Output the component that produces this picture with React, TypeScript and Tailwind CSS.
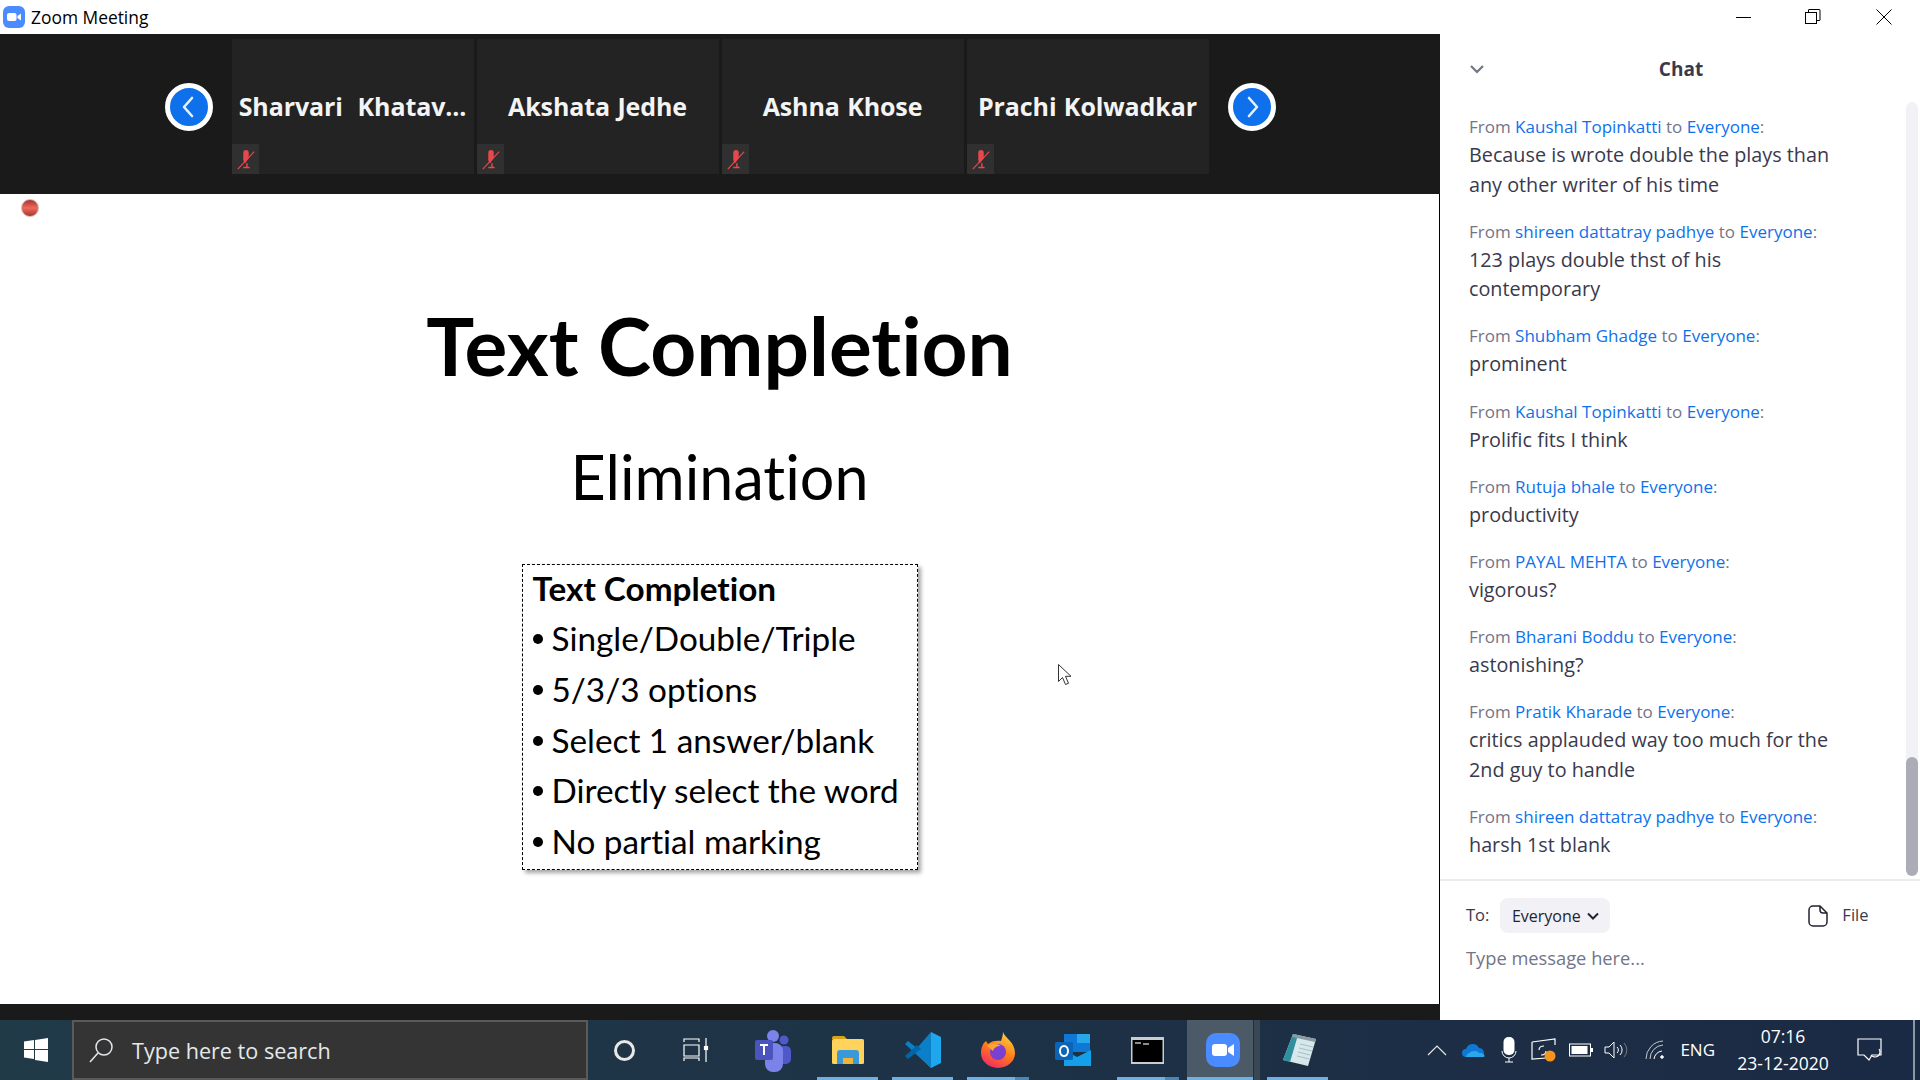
import type { ReactNode } from "react";

const participants = ["Sharvari  Khatav...", "Akshata Jedhe", "Ashna Khose", "Prachi Kolwadkar"];

const messages = [
  { from: "Kaushal Topinkatti", text: ["Because is wrote double the plays than", "any other writer of his time"] },
  { from: "shireen dattatray padhye", text: ["123 plays double thst of his", "contemporary"] },
  { from: "Shubham Ghadge", text: ["prominent"] },
  { from: "Kaushal Topinkatti", text: ["Prolific fits I think"] },
  { from: "Rutuja bhale", text: ["productivity"] },
  { from: "PAYAL MEHTA", text: ["vigorous?"] },
  { from: "Bharani Boddu", text: ["astonishing?"] },
  { from: "Pratik Kharade", text: ["critics applauded way too much for the", "2nd guy to handle"] },
  { from: "shireen dattatray padhye", text: ["harsh 1st blank"] },
];

const bullets = ["Single/Double/Triple", "5/3/3 options", "Select 1 answer/blank", "Directly select the word", "No partial marking"];

function MutedMic() {
  return (
    <div className="absolute bottom-0 left-0 flex h-[30px] w-[27px] items-center justify-center bg-[#303030]">
      <svg width="20" height="20" viewBox="0 0 22 24" fill="none" preserveAspectRatio="none" className="mt-[1px] ml-[2px]">
        <path d="M8 3a3 3 0 0 1 6 0v7l-4 6c-1-1-2-3-2-5z" fill="#e5484d" />
        <path d="M12 16v4M8 21h7" stroke="#e5484d" strokeWidth="1.6" />
        <path d="M2 23 20 2" stroke="#e5484d" strokeWidth="1.2" />
      </svg>
    </div>
  );
}

function NavButton({ right }: { right?: boolean }) {
  return (
    <div className="flex h-12 w-12 items-center justify-center rounded-full border-[5px] border-white bg-[#0e71eb]">
      <svg width="28" height="28" viewBox="0 0 28 28" fill="none" stroke="#e8f1fd" strokeWidth="2.6" strokeLinecap="round" strokeLinejoin="round">
        <path d={right ? "M11 5l8 9-8 9" : "M17 5l-8 9 8 9"} />
      </svg>
    </div>
  );
}

function TitleBar() {
  return (
    <div className="flex h-[34px] shrink-0 items-center bg-white pl-[3px] font-['Open_Sans',sans-serif]">
      <svg width="22" height="22" viewBox="0 0 22 22" className="mr-[6px]">
        <rect width="22" height="22" rx="6" fill="#4a8cff" />
        <rect x="4" y="7" width="9.5" height="8" rx="2" fill="white" />
        <path d="M14.5 10l3.5-2.5v7L14.5 12z" fill="white" />
      </svg>
      <span className="text-[17.4px] text-black">Zoom Meeting</span>
      <div className="ml-auto flex items-center">
        <svg width="16" height="16" viewBox="0 0 16 16" fill="none" stroke="black" strokeWidth="1" className="mr-[53px]">
          <path d="M0 8.5h15" />
        </svg>
        <svg width="16" height="16" viewBox="0 0 16 16" fill="none" stroke="black" strokeWidth="1" className="mr-[55px]">
          <rect x="0.5" y="3.5" width="11" height="11" />
          <path d="M3.5 3.5V1a.5.5 0 0 1 .5-.5h10.5a.5.5 0 0 1 .5.5v10a.5.5 0 0 1-.5.5h-3" />
        </svg>
        <svg width="16" height="16" viewBox="0 0 16 16" fill="none" stroke="black" strokeWidth="1" className="mr-[28px]">
          <path d="M.5.5l15 15M15.5.5l-15 15" />
        </svg>
      </div>
    </div>
  );
}

function ParticipantStrip() {
  return (
    <div className="flex h-[160px] shrink-0 justify-center gap-[3px] bg-[#1a1a1a] pt-[5px]">
      <div className="mr-[16px] flex h-[135px] items-center">
        <NavButton />
      </div>
      {participants.map((name) => (
        <div key={name} className="relative flex h-[135px] w-[242px] items-center justify-center whitespace-pre bg-[#232323] font-['Open_Sans',sans-serif] text-[25px] font-bold tracking-[-0.1px] text-[#f4f4f4] [word-spacing:1px]">
          {name}
          <MutedMic />
        </div>
      ))}
      <div className="ml-[16px] flex h-[135px] items-center">
        <NavButton right />
      </div>
    </div>
  );
}

function Slide() {
  return (
    <div className="relative flex flex-1 flex-col items-center border-r border-black bg-white font-['Lato',sans-serif] text-black [font-variant-ligatures:none]">
      <div className="absolute top-[5px] left-[21px] h-[18px] w-[18px] rounded-full border border-[#d9b5b0] bg-gradient-to-b from-[#a8352c] via-[#ee6a5e] to-[#a8352c]" />
      <h1 className="mt-[101px] text-[80.2px] leading-[100px] font-bold">Text Completion</h1>
      <div className="mt-[44px] text-[61px] leading-[76px]">Elimination</div>
      <div className="mt-[49px] h-[306px] w-[396px] border border-dashed border-black px-[10px] shadow-[3px_3px_4px_rgba(0,0,0,0.35)]">
        <div className="mb-[3px] text-[33.3px] leading-[46px] font-bold">Text Completion</div>
        {bullets.map((b) => (
          <div key={b} className="flex h-[50.7px] items-center text-[33.3px]">
            <span className="mr-[9px] inline-block h-[10px] w-[10px] rounded-full bg-black" />
            {b}
          </div>
        ))}
      </div>
      <svg width="16" height="24" viewBox="0 0 16 24" className="absolute top-[469px] left-[1057px]">
        <path d="M1.5 1.5v17l4-4 3 7 3-1.2-3-7h5.5z" fill="white" stroke="#333" strokeWidth="1" />
      </svg>
    </div>
  );
}

function ChatPanel() {
  return (
    <div className="relative flex w-[480px] flex-col bg-white font-['Open_Sans',sans-serif]">
      <div className="relative flex h-[79px] shrink-0 items-start justify-center pt-[22px]">
        <svg width="14" height="10" viewBox="0 0 14 10" fill="none" stroke="#6e7680" strokeWidth="2.2" className="absolute top-[30px] left-[30px]">
          <path d="M1 2l6 6 6-6" />
        </svg>
        <span className="ml-[2px] text-[19px] leading-[26px] font-bold text-[#39394d]">Chat</span>
      </div>
      <div className="flex h-[766px] flex-col overflow-hidden pl-[29px]">
        {messages.map((m, i) => (
          <div key={i} className="mb-[18.7px]">
            <div className="text-[17px] leading-[27px] text-[#747487]">
              From <span className="text-[#0e71eb]">{m.from}</span> to <span className="text-[#0e71eb]">Everyone</span>:
            </div>
            {m.text.map((line) => (
              <div key={line} className="text-[19.8px] leading-[29.5px] text-[#39394d]">{line}</div>
            ))}
          </div>
        ))}
      </div>
      <div className="absolute top-[68px] right-[2px] h-[774px] w-3 rounded-md bg-[#f1f1f6]">
        <div className="absolute right-0 bottom-0 h-[119px] w-3 rounded-md bg-[#acacb9]" />
      </div>
      <div className="border-t-2 border-[#ececf0] pl-[26px]">
        <div className="mt-[17px] flex items-center text-[16.5px] text-[#39394d]">
          To:
          <div className="ml-[11px] flex h-[35px] w-[110px] items-center justify-center gap-[6px] rounded-lg bg-[#f1f1f6] text-[16px] text-[#232333]">
            Everyone
            <svg width="12" height="8" viewBox="0 0 12 8" fill="none" stroke="#232333" strokeWidth="2">
              <path d="M1 1.5l5 5 5-5" />
            </svg>
          </div>
          <svg width="20" height="22" viewBox="0 0 20 22" fill="none" stroke="#232333" strokeWidth="1.5" className="mr-[14px] ml-[198px]">
            <path d="M5 1h7l7 7v9a4 4 0 0 1-4 4H5a4 4 0 0 1-4-4V5a4 4 0 0 1 4-4zM12 1v4a3 3 0 0 0 3 3h4" />
          </svg>
          File
        </div>
        <div className="mt-[10px] text-[18.3px] leading-[30px] text-[#747487]">Type message here...</div>
      </div>
    </div>
  );
}

function Slot({ children, underline, stacked, active, w = "w-[75px]" }: { children: ReactNode; underline?: string; stacked?: boolean; active?: boolean; w?: string }) {
  return (
    <div className={`relative flex h-full shrink-0 items-center justify-center ${w}`}>
      {active && <div className="absolute inset-y-0 left-[2px] w-[66px] bg-[#4b5a66]" />}
      {active && <div className="absolute inset-y-0 left-[69px] w-[6px] bg-[#3a4854]" />}
      <div className="relative flex">{children}</div>
      {underline && <div className={`absolute bottom-0 h-[3px] bg-[#6cb0e4] ${underline}`} />}
      {stacked && <div className="absolute right-[6px] bottom-0 h-[3px] w-[14px] bg-[#4a86b4]" />}
    </div>
  );
}

function TeamsIcon() {
  return (
    <svg width="36" height="44" viewBox="0 0 36 44">
      <circle cx="29" cy="12" r="4.5" fill="#5059c9" />
      <rect x="24" y="18" width="12" height="18" rx="5" fill="#5059c9" />
      <circle cx="18" cy="8" r="6" fill="#7b83eb" />
      <rect x="10" y="15" width="18" height="29" rx="8" fill="#7b83eb" />
      <rect x="0" y="12" width="18" height="20" rx="2" fill="#4b53bc" />
      <path d="M5 17h8M9 17v10" stroke="white" strokeWidth="2" />
    </svg>
  );
}

function ExplorerIcon() {
  return (
    <svg width="32" height="28" viewBox="0 0 32 28">
      <path d="M0 2a2 2 0 0 1 2-2h10l3 3h-15z" fill="#d9a21b" />
      <rect y="3" width="32" height="25" rx="1.5" fill="#ffd35c" />
      <path d="M5 28V17a3 3 0 0 1 3-3h16a3 3 0 0 1 3 3v11h-6v-6H11v6z" fill="#3a9ad9" />
      <rect x="11" y="22" width="10" height="6" fill="#f2b53a" />
    </svg>
  );
}

function VsCodeIcon() {
  return (
    <svg width="36" height="36" viewBox="0 0 36 36">
      <path d="M26 0l10 5v26l-10 5-14-14 14-10z" fill="#1fa7ee" />
      <path d="M26 0v36L0 12l3-3 9 7z" fill="#0b7fc7" />
      <path d="M0 24l3 3 9-7 4-3-4-4z" fill="#0065a9" />
    </svg>
  );
}

function FirefoxIcon() {
  return (
    <svg width="34" height="36" viewBox="0 0 34 36">
      <defs>
        <linearGradient id="ff" x1="0.7" y1="0" x2="0.2" y2="1">
          <stop offset="0" stopColor="#ffcf3a" />
          <stop offset="0.5" stopColor="#ff7a1a" />
          <stop offset="1" stopColor="#f0246a" />
        </linearGradient>
      </defs>
      <path d="M22 0c2 6 12 10 12 21a17 15 0 0 1-34 0c0-5 2-10 5-12l2 3c3-3 9-4 13-3 1-3 2-6 2-9z" fill="url(#ff)" />
      <circle cx="17" cy="20" r="8" fill="#7b3fd1" />
      <path d="M6 14c4-3 10-3 14 0-5 0-7 2-8 5z" fill="#ffa436" />
    </svg>
  );
}

function OutlookIcon() {
  return (
    <svg width="36" height="32" viewBox="0 0 36 32">
      <rect x="9" y="0" width="26" height="18" fill="#0f78d4" />
      <rect x="22" y="0" width="13" height="9" fill="#28a8ea" />
      <path d="M9 16l13 7 14-7v16H9z" fill="#14a0e8" />
      <rect x="0" y="8" width="18" height="18" rx="1.5" fill="#0a65b8" />
      <ellipse cx="9" cy="17" rx="4" ry="5" fill="none" stroke="white" strokeWidth="2" />
    </svg>
  );
}

function CmdIcon() {
  return (
    <svg width="33" height="27" viewBox="0 0 33 27">
      <rect width="33" height="27" fill="#c9cdd0" />
      <rect x="1.5" y="3" width="30" height="22" fill="#000" />
      <path d="M4 6h6M12 7h6" stroke="#bbb" strokeWidth="1.4" />
    </svg>
  );
}

function NotepadIcon() {
  return (
    <svg width="36" height="36" viewBox="0 0 36 36">
      <path d="M13 2l23 5-8 27L3 28z" fill="#d6e8ea" />
      <path d="M3 28l10-26 5 1L10 30z" fill="#2f8f9f" />
      <path d="M13 2l23 5-1 3-23-5z" fill="#8a9aa0" />
      <path d="M20 12l13 3M19 16l13 3M18 20l12 3M17 24l12 3" stroke="#a9bcc2" strokeWidth="1" />
    </svg>
  );
}

function ZoomIcon() {
  return (
    <svg width="34" height="34" viewBox="0 0 34 34">
      <rect width="34" height="34" rx="10" fill="#4a8cff" />
      <rect x="6" y="11" width="15" height="12" rx="3" fill="white" />
      <path d="M22 15l6-4v12l-6-4z" fill="white" />
    </svg>
  );
}

function Tray() {
  return (
    <div className="ml-auto flex h-full items-center font-['Open_Sans',sans-serif] text-white">
      <svg width="20" height="12" viewBox="0 0 20 12" fill="none" stroke="#e8e8e8" strokeWidth="1.2" className="mr-[15px]">
        <path d="M1 11l9-9 9 9" />
      </svg>
      <svg width="24" height="16" viewBox="0 0 24 16" className="mr-[15px]">
        <path d="M4 15a4 4 0 0 1 0-8 7 7 0 0 1 13-1 5 5 0 0 1 3 9z" fill="#0f78d4" />
        <path d="M4 15c-1 0 3-6 8-6s4 2 6 2 6 2 4 4z" fill="#28a8ea" />
      </svg>
      <svg width="16" height="26" viewBox="0 0 16 26" className="mr-[14px]">
        <rect x="2.5" y="0" width="11" height="18" rx="5" fill="white" />
        <path d="M1 14a7 7 0 0 0 14 0M8 21v4M4 25h8" fill="none" stroke="white" strokeWidth="1" />
      </svg>
      <svg width="26" height="24" viewBox="0 0 26 24" className="mr-[12px]">
        <path d="M1 4l23-3v6M1 4v17l14-1" fill="none" stroke="white" strokeWidth="1.2" />
        <path d="M8 12c0-3 3-4 5-4M15 13c0 3-3 4-5 4" fill="none" stroke="white" strokeWidth="1.2" />
        <circle cx="19" cy="18" r="5.5" fill="#f7941d" />
      </svg>
      <svg width="24" height="14" viewBox="0 0 24 14" className="mr-[11px]">
        <rect x="0.5" y="1" width="21" height="12" fill="none" stroke="white" />
        <rect x="2.5" y="3" width="16" height="8" fill="white" />
        <rect x="22" y="5" width="2" height="4" fill="white" />
      </svg>
      <svg width="24" height="18" viewBox="0 0 24 18" fill="none" stroke="white" strokeWidth="1" className="mr-[17px]">
        <path d="M1 6h4l5-5v16l-5-5H1z" />
        <path d="M13 6a4 4 0 0 1 0 6M16 4a7 7 0 0 1 0 10" />
        <path d="M20 2a10 10 0 0 1 0 14" stroke="#778" />
      </svg>
      <svg width="20" height="20" viewBox="0 0 20 20" fill="none" stroke="white" strokeWidth="1" className="mr-[15px]">
        <path d="M1 19A18 18 0 0 1 18 1M5 19A14 14 0 0 1 18 5" stroke="#c8ccd2" />
        <path d="M9 19a9 9 0 0 1 8-8" />
        <circle cx="17" cy="17" r="1.3" fill="white" />
      </svg>
      <span className="mr-[20px] text-[17px]">ENG</span>
      <div className="mr-[26px] flex w-[96px] flex-col items-center text-[17.5px] leading-[27px]">
        <span>07:16</span>
        <span>23-12-2020</span>
      </div>
      <svg width="26" height="24" viewBox="0 0 26 24" fill="none" stroke="white" strokeWidth="1.2" className="mr-[30px]">
        <path d="M1 1h23v16H15l-3 5-5-5H1z" />
        <path d="M22 11a5 5 0 0 1-8 6" />
      </svg>
      <div className="h-full w-[2px] bg-[#8e98a4]" />
      <div className="w-[5px]" />
    </div>
  );
}

function Taskbar() {
  return (
    <div className="flex h-[60px] shrink-0 items-center bg-gradient-to-r from-[#203a48] to-[#1b2a44]">
      <div className="flex h-full w-[72px] shrink-0 items-center justify-center">
        <svg width="24" height="24" viewBox="0 0 24 24" fill="white">
          <path d="M0 3.5l10-1.4V11H0zM11 2l13-2v11H11zM0 12h10v9L0 19.6zM11 12h13v12l-13-2z" />
        </svg>
      </div>
      <div className="flex h-full w-[516px] shrink-0 items-center border-2 border-[#5a5a5a] bg-[#343434] font-['Open_Sans',sans-serif] text-[21.6px] text-[#e4e8ea]">
        <svg width="26" height="26" viewBox="0 0 26 26" fill="none" stroke="#e4e8ea" strokeWidth="1.5" className="mr-[17px] ml-[15px]">
          <circle cx="15" cy="10" r="8" />
          <path d="M9 16l-8 9" />
        </svg>
        <span className="mt-[2px]">Type here to search</span>
      </div>
      <Slot w="w-[72px]">
        <div className="h-[21px] w-[21px] rounded-full border-[3px] border-[#e8e8e8]" />
      </Slot>
      <Slot>
        <svg width="26" height="24" viewBox="0 0 26 24" fill="none" stroke="white" strokeWidth="1.2" className="-ml-[3px]">
          <path d="M1 4V1h15v3M1 7h15v11H1zM1 23v-3h15v3M23 0v8M23 12v12" />
          <rect x="21.5" y="8.5" width="3" height="3" fill="white" />
        </svg>
      </Slot>
      <Slot><TeamsIcon /></Slot>
      <Slot underline="w-[61px]"><ExplorerIcon /></Slot>
      <Slot underline="w-[61px]"><VsCodeIcon /></Slot>
      <Slot underline="w-[61px]" stacked><FirefoxIcon /></Slot>
      <Slot><OutlookIcon /></Slot>
      <Slot underline="w-[61px]" stacked><CmdIcon /></Slot>
      <Slot active underline="w-[66px] left-[2px]"><ZoomIcon /></Slot>
      <Slot underline="w-[61px]"><NotepadIcon /></Slot>
      <Tray />
    </div>
  );
}

export default function App() {
  return (
    <div className="flex h-screen w-screen flex-col overflow-hidden bg-white">
      <TitleBar />
      <div className="flex min-h-0 flex-1">
        <div className="flex w-[1440px] shrink-0 flex-col">
          <ParticipantStrip />
          <Slide />
          <div className="h-4 shrink-0 bg-[#1a1a1a]" />
        </div>
        <ChatPanel />
      </div>
      <Taskbar />
    </div>
  );
}
